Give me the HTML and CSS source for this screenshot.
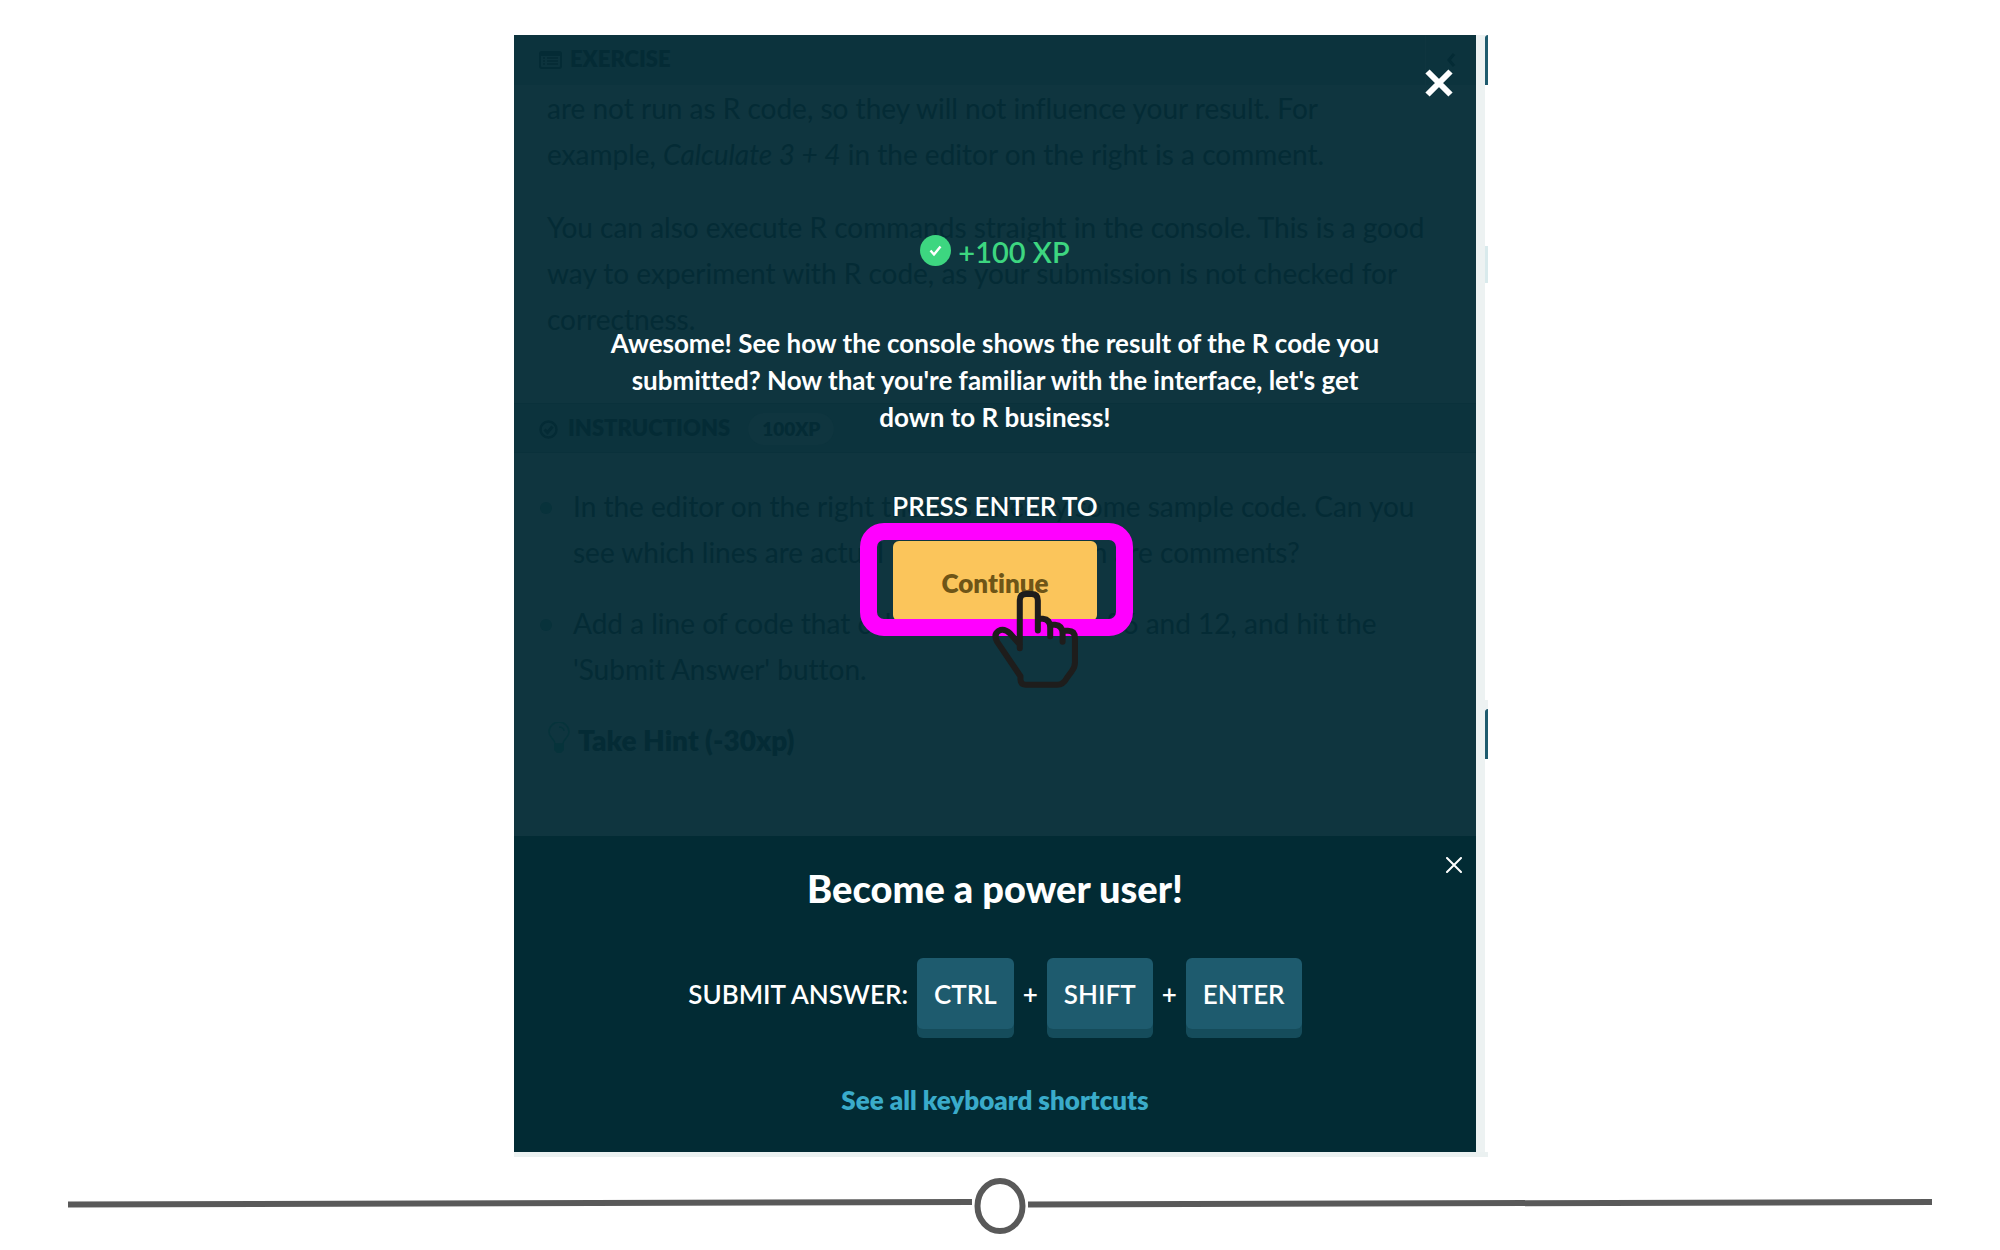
FILE: index.html
```html
<!DOCTYPE html>
<html lang="en">
<head>
<meta charset="utf-8">
<meta name="viewport" content="width=device-width, initial-scale=1">
<title>Exercise complete</title>
<link rel="stylesheet" href="styles.css">
</head>
<body>
<main class="stage">
  <div class="panel">
    <section class="lesson">
      <header class="bar">
        <svg class="bar-icon wide" viewBox="0 0 23 18" aria-hidden="true"><rect x="1" y="1" width="21" height="16" rx="2" fill="none" stroke="currentColor" stroke-width="2"/><path d="M1 3h21M4 7h2M8 7h11M4 10h2M8 10h11M4 13h2M8 13h11" stroke="currentColor" stroke-width="1.6"/><path d="M1 3h21" stroke="currentColor" stroke-width="4"/></svg>
        <h2 class="bar-title">EXERCISE</h2>
        <span class="collapse"><svg viewBox="0 0 10 14" width="10" height="14" aria-hidden="true"><path d="M8 1 3 7l5 6" fill="none" stroke="currentColor" stroke-width="3"/></svg></span>
      </header>
      <div class="text">
        <p>are not run as R code, so they will not influence your result. For<br>example, <em>Calculate 3 + 4</em> in the editor on the right is a comment.</p>
        <p>You can also execute R commands straight in the console. This is a good<br>way to experiment with R code, as your submission is not checked for<br>correctness.</p>
      </div>
      <header class="bar lined">
        <svg class="bar-icon" viewBox="0 0 19 19" aria-hidden="true"><circle cx="9.500" cy="9.500" r="8" fill="none" stroke="currentColor" stroke-width="2.400"/><path d="M5.500 9.500l3 3 5-6" fill="none" stroke="currentColor" stroke-width="3"/></svg>
        <h2 class="bar-title">INSTRUCTIONS</h2>
        <span class="pill">100XP</span>
      </header>
      <ul class="steps">
        <li>In the editor on the right there is already some sample code. Can you<br>see which lines are actual R code and which are comments?</li>
        <li>Add a line of code that calculates the sum of 6 and 12, and hit the<br>'Submit Answer' button.</li>
      </ul>
      <div class="hint">
        <svg class="bulb" viewBox="0 0 22 32" aria-hidden="true"><path d="M7 22c0-5-6-6-6-12a10 10 0 0 1 20 0c0 6-6 7-6 12zM11 5c3 0 5 2 5 4" fill="none" stroke="currentColor" stroke-width="1.500"/><path d="M6 22h10v6l-3 3H9l-3-3z" fill="currentColor"/></svg>
        <strong>Take Hint (-30xp)</strong>
      </div>
    </section>

    <section class="result">
      <button class="close" type="button" aria-label="Close"><svg viewBox="0 0 28 28" width="28" height="28" aria-hidden="true"><path d="M2.500 2.500l23 23M25.500 2.500l-23 23" stroke="currentColor" stroke-width="6"/></svg></button>
      <p class="xp">
        <svg viewBox="0 0 31 31" width="31" height="31" aria-hidden="true"><circle cx="15.500" cy="15.500" r="15.500" fill="currentColor"/><path d="M10.500 15.500l3.500 4 6.500-8" fill="none" stroke="#fff" stroke-width="2.400"/></svg>
        <span>+100 XP</span>
      </p>
      <p class="message">Awesome! See how the console shows the result of the R code you<br>submitted? Now that you're familiar with the interface, let's get<br>down to R business!</p>
      <p class="prompt">PRESS ENTER TO</p>
      <div class="action">
        <button class="continue" type="button">Continue</button>
        <span class="ring"></span>
        <svg class="pointer" viewBox="440 260 290 320" aria-hidden="true"><path d="M538 443V300q0-19 19-19h16q19 0 19 19v90M593 355h14q22 2 22 26v26M629 373h14q23 2 23 26v25M668 391h14q21 0 21 22v73q0 14-9 25l-16 22q-10 19-28 19H555q-14 0-15-15v-10L471 425q-13-23 4-34 16-9 34 8l29 33" fill="none" stroke="#1e1d1c" stroke-width="18" stroke-linecap="round" stroke-linejoin="round"/></svg>
      </div>
    </section>

    <section class="shortcuts">
      <button class="dismiss" type="button" aria-label="Dismiss"><svg viewBox="0 0 16 16" width="16" height="16" aria-hidden="true"><path d="M1 1l14 14M15 1L1 15" stroke="currentColor" stroke-width="2" stroke-linecap="round"/></svg></button>
      <h1 class="headline">Become a power user!</h1>
      <p class="combo"><span>SUBMIT ANSWER:</span><kbd>CTRL</kbd><span>+</span><kbd>SHIFT</kbd><span>+</span><kbd>ENTER</kbd></p>
      <a class="all" href="#">See all keyboard shortcuts</a>
    </section>
  </div>
  <div class="editor">
    <div class="tab"></div>
    <div class="code"><div class="active-line"></div></div>
    <div class="gap"></div>
    <div class="tab"></div>
  </div>
</main>
<footer class="timeline">
  <svg class="track" viewBox="0 0 904 60" preserveAspectRatio="none" aria-hidden="true"><path d="M0 28.500 904 26" stroke="#595959" stroke-width="6"/></svg>
  <svg class="knob" viewBox="0 0 52 58" width="52" height="58" aria-hidden="true"><ellipse cx="26" cy="29" rx="22.500" ry="25" fill="#fff" stroke="#595959" stroke-width="6"/></svg>
  <svg class="track" viewBox="0 0 904 60" preserveAspectRatio="none" aria-hidden="true"><path d="M0 28.500 904 26" stroke="#595959" stroke-width="6"/></svg>
</footer>
</body>
</html>
```
FILE: styles.css
```css
* { box-sizing: border-box; }
body {
  margin: 0;
  padding-top: 35px;
  background: #fff;
  color: #fff;
  font-family: Lato, "Open Sans", sans-serif;
  font-size: 26px;
  line-height: 36px;
  font-variant-ligatures: none;
}
h1, h2, p, ul { margin: 0; padding: 0; }
button { border: 0; padding: 0; font: inherit; font-variant-ligatures: none; background: none; color: inherit; cursor: pointer; }
svg { display: block; flex: none; }

.stage {
  display: flex;
  width: 48.7%;
  margin-left: 25.7%;
  border-bottom: 5px solid #ebf1f1;
}
.panel {
  flex: 1;
  display: grid;
  grid-template-rows: 801px auto;
  background: #0f353f;
  white-space: nowrap;
}

/* lesson text, dimmed behind the result */
.lesson { grid-area: 1 / 1; color: #042b35; font-size: 28px; line-height: 46px; min-width: 0; overflow: hidden; }
.bar {
  display: flex;
  align-items: center;
  height: 50px;
  padding-left: 25px;
  background: #0c333d;
}
.bar.lined { margin-top: 61px; padding-top: 2px; border-top: 1px solid #0a313b; border-bottom: 1px solid #0a313b; }
.bar-icon { width: 19px; height: 19px; margin-right: 10px; }
.bar-icon.wide { width: 23px; height: 18px; margin-right: 8px; }
.bar-title { font-size: 22px; font-weight: 800; line-height: 28px; padding-bottom: 2px; }
.collapse {
  display: flex;
  align-items: center;
  align-self: stretch;
  margin-left: auto;
  padding: 0 20px;
  border-left: 1px solid #0f353f;
}
.pill {
  margin-left: 18px;
  padding: 0 14px;
  border-radius: 16px;
  background: #0f353f;
  font-size: 19px;
  font-weight: 800;
  line-height: 32px;
}
.text { display: grid; gap: 27px; padding-left: 33px; }
.steps { display: grid; gap: 25px; padding: 30px 0 25px 59px; list-style: none; }
.steps li { position: relative; }
.steps li::before {
  content: "";
  position: absolute;
  left: -33px;
  top: 19px;
  width: 12px;
  height: 12px;
  border-radius: 50%;
  background: #08323b;
}
.hint { display: flex; align-items: center; gap: 8px; padding-left: 34px; }
.hint strong { font-weight: 800; }
.bulb { width: 22px; height: 32px; margin-bottom: 4px; color: #06333b; }

.result {
  position: relative;
  grid-area: 1 / 1;
  display: flex;
  flex-direction: column;
  align-items: center;
  padding-top: 199px;
  text-align: center;
}
.close { position: absolute; top: 34px; right: 23px; }
.xp { display: flex; align-items: center; gap: 7px; color: #3dd680; font-size: 29px; font-weight: 600; }
.xp svg { margin-bottom: 3px; }
.message { margin-top: 55px; font-weight: 700; line-height: 37px; }
.prompt { margin-top: 52px; font-weight: 600; }
.action { position: relative; margin-top: 17px; }
.continue {
  width: 204px;
  height: 80px;
  padding-top: 4px;
  border-radius: 6px;
  background: #fbc55b;
  color: #6e5517;
  font-weight: 800;
}
.ring {
  position: absolute;
  inset: -18px -36px -15px -33px;
  border: 17px solid #f0f;
  border-radius: 24px;
  pointer-events: none;
}
.pointer { position: absolute; left: 94px; top: 46px; width: 97px; height: 107px; pointer-events: none; }

.shortcuts {
  position: relative;
  display: flex;
  flex-direction: column;
  align-items: center;
  padding: 30px 0 34px;
  background: #022b34;
}
.dismiss { position: absolute; top: 21px; right: 14px; }
.headline { font-size: 38px; font-weight: 900; line-height: 44px; }
.combo { display: flex; align-items: center; gap: 9px; margin: 48px 0 44px; font-weight: 600; }
kbd {
  padding: 18px 17px 17px;
  border-radius: 6px;
  background: #1e5b6e;
  box-shadow: 0 9px #154c5b;
  margin-bottom: 9px;
  font: inherit;
}
.combo span { padding-bottom: 8px; }
.all { color: #3aabca; font-weight: 800; text-decoration: none; }

/* edge of the code editor */
.editor {
  display: flex;
  flex-direction: column;
  width: 12px;
  border-left: 9px solid #edf2f2;
}
.tab { height: 50px; border-radius: 6px 0 0; background: #1e5b6e; }
.code { height: 615px; padding-top: 161px; }
.active-line { height: 37px; background: #d9eaec; }
.gap { height: 9px; background: #edf2f2; }

.timeline { display: flex; align-items: center; gap: 2px; margin-top: 19px; padding: 0 68px; }
.track { flex: 1; min-width: 0; height: 60px; }
```
